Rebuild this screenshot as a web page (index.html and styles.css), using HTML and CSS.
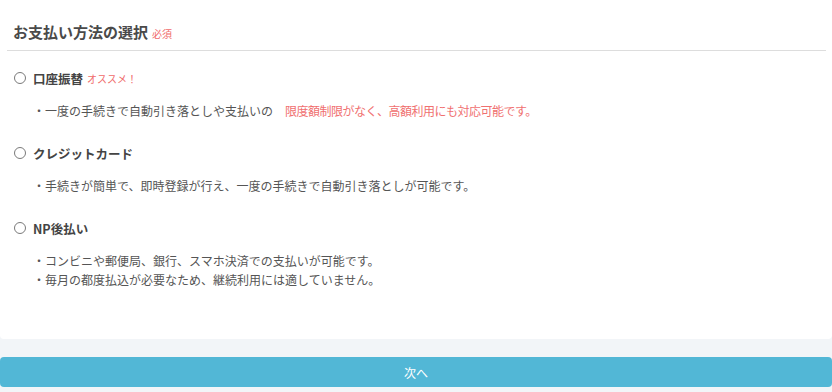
FILE: index.html
```html
<!DOCTYPE html>
<html lang="ja">
<head>
    <meta charset="UTF-8">
    <meta name="viewport" content="width=device-width, initial-scale=1.0">
    <title>お支払い方法の選択</title>

    <link rel="stylesheet" href="styles.css">
</head>

<body>
    <div class="card">
        <h3 class="title">お支払い方法の選択<span class="required">必須</span></h3>

        <ul class="options">
            <li class="option">
                <label class="optionLabel">
                    <span class="radio"></span>口座振替<span class="recommend">オススメ！</span>
                </label>
                <p class="desc">・一度の手続きで自動引き落としや支払いの<span class="accent">限度額制限がなく、高額利用にも対応可能です。</span></p>
            </li>
            <li class="option">
                <label class="optionLabel">
                    <span class="radio"></span>クレジットカード
                </label>
                <p class="desc">・手続きが簡単で、即時登録が行え、一度の手続きで自動引き落としが可能です。</p>
            </li>
            <li class="option">
                <label class="optionLabel">
                    <span class="radio"></span>NP後払い
                </label>
                <p class="desc">・コンビニや郵便局、銀行、スマホ決済での支払いが可能です。<br>・毎月の都度払込が必要なため、継続利用には適していません。</p>
            </li>
        </ul>
    </div>

    <button type="button" class="btnNext">次へ</button>
</body>

</html>
```

FILE: styles.css
```css
body {
    margin: 0;
    background-color: #f2f5f8;
    font-family: "Noto Sans CJK JP", "Noto Sans", sans-serif;
    color: #555555;
}

.card {
    height: 339px;
    box-sizing: border-box;
    padding: 0 6px 0 7px;
    background-color: #ffffff;
    border-radius: 0 0 4px 4px;
}

.title {
    margin: 0;
    padding: 20px 0 6px 6px;
    height: 24px;
    line-height: 24px;
    font-size: 15px;
    font-weight: bold;
    color: #4a4a4a;
    border-bottom: 1px solid #dddddd;
}

.required {
    margin-left: 4px;
    font-size: 10px;
    font-weight: normal;
    color: #f06b6b;
}

.options {
    list-style: none;
    margin: 0;
    padding: 17px 0 0 7px;
}

.option {
    margin-bottom: 23px;
}

.optionLabel {
    display: flex;
    align-items: center;
    height: 20px;
    font-size: 12.5px;
    font-weight: bold;
    color: #444444;
}

.radio {
    width: 10px;
    height: 10px;
    margin-right: 7px;
    border: 1.5px solid #7a7a7a;
    border-radius: 50%;
}

.recommend {
    margin-left: 4px;
    font-size: 10px;
    font-weight: normal;
    color: #f06b6b;
}

.desc {
    margin: 13px 0 0 19px;
    font-size: 12px;
    line-height: 19px;
}

/* 赤字の強調部分 */
.accent {
    margin-left: 12px;
    letter-spacing: -0.5px;
    color: #f07070;
}

.btnNext {
    display: block;
    width: 100%;
    height: 30px;
    margin-top: 18px;
    border: none;
    border-radius: 4px;
    background-color: #52b7d6;
    color: #ffffff;
    font-family: "Noto Sans CJK JP", sans-serif;
    font-size: 12px;
}
```
